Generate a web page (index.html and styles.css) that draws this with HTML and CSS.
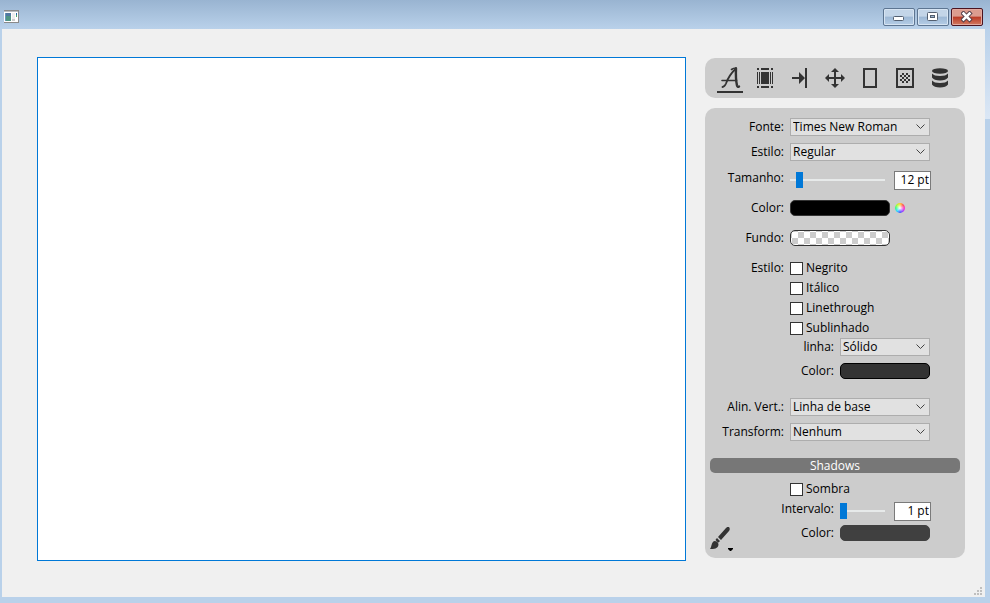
FILE: index.html
```html
<!DOCTYPE html>
<html lang="pt">
<head>
<meta charset="utf-8">
<title>Editor</title>
<link rel="stylesheet" href="styles.css">
</head>
<body>
<div class="window">
  <header class="titlebar">
    <svg class="app-icon" width="16" height="14" viewBox="0 0 16 14" shape-rendering="crispEdges">
      <path fill="#8a8a8a" d="M0 0h15v13H0z"/><path fill="#b8bcc0" d="M0 1h14v1H0z"/><path fill="#fff" d="M0 2h14v10H0z"/>
      <path fill="#5078a0" d="M2 3h5v3H2z"/><path fill="#4f9583" d="M2 6h5v5H2z"/><path fill="#6796bd" d="M1 3h1v8H1z"/>
      <path fill="#eee" d="M8 3h3v8H8z"/><path fill="#ccc" d="M8 9h3v2H8z"/><path fill="#2467a8" d="M12 3h1v2h-1z"/><path fill="#48a868" d="M12 5h1v2h-1z"/>
    </svg>
    <div class="window-buttons">
      <button class="win-btn" aria-label="Minimizar"><svg width="12" height="12" viewBox="0 0 12 12"><rect x=".5" y="5.500" width="10" height="4" rx="1" fill="#fff" stroke="#535f70"/></svg></button>
      <button class="win-btn" aria-label="Maximizar"><svg width="12" height="12" viewBox="0 0 12 12"><rect x=".5" y="1.500" width="10" height="8" rx="1" fill="#fff" stroke="#535f70"/><rect x="3.500" y="4.500" width="4" height="2" fill="#9eb6d0" stroke="#535f70"/></svg></button>
      <button class="win-btn win-close" aria-label="Fechar"><svg width="12" height="12" viewBox="0 0 12 12"><path d="M2.500 2.500l6 6m0-6l-6 6" stroke="#56424c" stroke-width="4.500" stroke-linecap="square"/><path d="M2.500 2.500l6 6m0-6l-6 6" stroke="#fff" stroke-width="2.500" stroke-linecap="square"/></svg></button>
    </div>
  </header>
  <main class="client">
    <div class="editor" contenteditable="true" role="textbox" aria-label="Texto"></div>
    <aside class="sidebar">
      <nav class="tools">
        <button class="tool tool-active" aria-label="Fonte"><svg width="26" height="24" viewBox="0 0 26 24" fill="none" stroke="#333" stroke-linecap="round"><path stroke-width="1.800" d="M5.500 21q2 0 3.500-3.500Q12 9 19 2.500"/><path stroke-width="2.400" d="M19 2.500q-.5 10 1 17 .5 2 2 1"/><path stroke-width="1.600" d="M14.500 3.500q2-1.500 4.500-1.500M5 14.500h14.500"/></svg></button>
        <button class="tool" aria-label="Parágrafo"><svg width="16" height="20" viewBox="0 0 16 20" fill="#333" shape-rendering="crispEdges"><path d="M0 0h2v2H0zM4 0h8v2H4zM14 0h2v2h-2zM0 4h1v12H0zM15 4h1v12h-1zM4 4h8v12H4zM0 18h2v2H0zM4 18h8v2H4zM14 18h2v2h-2zM2 4h1v12H2zM13 4h1v12h-1z"/></svg></button>
        <button class="tool" aria-label="Tabulação"><svg width="16" height="20" viewBox="0 0 16 20" fill="#333"><path d="M0 9h7V4l6 6-6 6v-5H0zM13 0h2v20h-2z"/></svg></button>
        <button class="tool" aria-label="Posição"><svg width="20" height="20" viewBox="0 0 20 20" fill="#333"><path d="M10 0l4 4h-3v5h5V6l4 4-4 4v-3h-5v5h3l-4 4-4-4h3v-5H4v3l-4-4 4-4v3h5V4H6z"/></svg></button>
        <button class="tool" aria-label="Página"><svg width="14" height="20" viewBox="0 0 14 20" fill="none" stroke="#333" stroke-width="2"><path d="M1 1h12v18H1z"/></svg></button>
        <button class="tool" aria-label="Fundo"><svg width="18" height="20" viewBox="0 0 18 20" shape-rendering="crispEdges"><path fill="none" stroke="#333" stroke-width="2" d="M1 1h16v18H1z"/><path fill="#333" d="M6 5h2v2H6zM10 5h2v2h-2zM4 7h2v2H4zM8 7h2v2H8zM12 7h2v2h-2zM6 9h2v2H6zM10 9h2v2h-2zM4 11h2v2H4zM8 11h2v2H8zM12 11h2v2h-2zM6 13h2v2H6zM10 13h2v2h-2z"/></svg></button>
        <button class="tool" aria-label="Dados"><svg width="16" height="20" viewBox="0 0 16 20" fill="#333"><ellipse cx="8" cy="3" rx="8" ry="2.700"/><path d="M0 5.500q2 2.500 8 2.500t8-2.500v4Q14 12.500 8 12.500T0 9.500zM0 12.500q2 2.500 8 2.500t8-2.500v4Q14 19.500 8 19.500T0 16.500z"/></svg></button>
      </nav>
      <form class="panel">
        <div class="row"><label class="label" for="font">Fonte:</label><span class="combo"><select id="font"><option>Times New Roman</option></select><svg class="chevron" width="9" height="6" viewBox="0 0 9 6"><path d="M.5.5l4 4 4-4"/></svg></span></div>
        <div class="row gap-s"><label class="label" for="face">Estilo:</label><span class="combo"><select id="face"><option>Regular</option></select><svg class="chevron" width="9" height="6" viewBox="0 0 9 6"><path d="M.5.5l4 4 4-4"/></svg></span></div>
        <div class="row gap-m"><label class="label raised" for="size">Tamanho:</label><input class="slider" id="size" type="range" min="6" max="84" value="11"><input class="number" type="text" value="12 pt" aria-label="Tamanho em pontos"></div>
        <div class="row gap-m"><label class="label" for="color">Color:</label><button type="button" class="swatch swatch-black" id="color"></button><button type="button" class="wheel" aria-label="Escolher cor"></button></div>
        <div class="row gap-l"><label class="label" for="back">Fundo:</label><button type="button" class="swatch swatch-clear" id="back"></button></div>
        <fieldset class="styles gap-l">
          <legend class="hidden">Estilo do texto</legend>
          <span class="label">Estilo:</span>
          <div class="checks">
            <label class="check"><input type="checkbox">Negrito</label>
            <label class="check"><input type="checkbox">Itálico</label>
            <label class="check"><input type="checkbox">Linethrough</label>
            <label class="check"><input type="checkbox">Sublinhado</label>
          </div>
        </fieldset>
        <div class="row row-low"><label class="label label-wide" for="line">linha:</label><span class="combo combo-short"><select id="line"><option>Sólido</option></select><svg class="chevron" width="9" height="6" viewBox="0 0 9 6"><path d="M.5.5l4 4 4-4"/></svg></span></div>
        <div class="row gap-s"><label class="label label-wide" for="line-color">Color:</label><button type="button" class="swatch swatch-short swatch-dark" id="line-color"></button></div>
        <div class="row gap-xl"><label class="label" for="valign">Alin. Vert.:</label><span class="combo"><select id="valign"><option>Linha de base</option></select><svg class="chevron" width="9" height="6" viewBox="0 0 9 6"><path d="M.5.5l4 4 4-4"/></svg></span></div>
        <div class="row gap-s"><label class="label" for="transform">Transform:</label><span class="combo"><select id="transform"><option>Nenhum</option></select><svg class="chevron" width="9" height="6" viewBox="0 0 9 6"><path d="M.5.5l4 4 4-4"/></svg></span></div>
        <h2 class="section">Shadows</h2>
        <div class="shadows">
          <button type="button" class="brush" aria-label="Pincel"><svg width="25" height="26" viewBox="0 0 25 26"><path fill="#333" d="M19 0c1 1 1 3 0 4l-8 9-3-3 8-9q2-2 3-1zM7 11l3 3c-1 1-1.500 1.500-2 1.500L5.500 13q.5-1 1.500-2zM4.500 14q3 0 4 3c0 5-5 5-8.500 5 2-2 1-7 4.500-8z"/><path d="M18 21h5v1l-2 2h-1l-2-2z"/></svg></button>
          <div class="shadow-rows">
            <div class="row"><label class="check check-in"><input type="checkbox">Sombra</label></div>
            <div class="row gap-xs"><label class="label label-in raised" for="spread">Intervalo:</label><input class="slider slider-short" id="spread" type="range" min="1" max="20" value="1"><input class="number" type="text" value="1 pt" aria-label="Intervalo em pontos"></div>
            <div class="row gap-xs"><label class="label label-in" for="shadow-color">Color:</label><button type="button" class="swatch swatch-short swatch-grey" id="shadow-color"></button></div>
          </div>
        </div>
      </form>
    </aside>
    <svg class="grip" width="8" height="8" viewBox="0 0 8 8" fill="#bfbfbf" shape-rendering="crispEdges"><path d="M6 0h2v2H6zM3 3h2v2H3zM6 3h2v2H6zM0 6h2v2H0zM3 6h2v2H3zM6 6h2v2H6z"/></svg>
  </main>
</div>
</body>
</html>
```

FILE: styles.css
```css
* { box-sizing: border-box; }

body {
  margin: 0;
  font: 12px/20px "Open Sans", "Noto Sans", sans-serif;
  color: #000;
}

button, input, select { font: inherit; color: inherit; margin: 0; }
button { padding: 0; border: 0; background: none; }

.window {
  display: flex;
  flex-direction: column;
  min-height: 100vh;
  padding: 0 5px 6px 2px;
  background:
    linear-gradient(#b9d1ea, #dbe7f5) right 29px / 5px 90px no-repeat,
    linear-gradient(#99b4d1, #b9d1ea 29px);
}

.titlebar {
  display: flex;
  justify-content: space-between;
  align-items: flex-start;
  height: 29px;
}

.app-icon { margin: 10px 2px; }

.window-buttons { display: flex; gap: 2px; padding-top: 8px; margin-right: 2px; }

.win-btn {
  display: grid;
  place-items: center;
  width: 32px;
  height: 18px;
  border: 1px solid #5d7591;
  border-radius: 2px;
  background: linear-gradient(#c3d5e8 45%, #9db8d5 50%, #b5cde6);
  box-shadow: inset 0 0 0 1px #d6e4f2;
}

.win-close {
  border-color: #4b1420;
  background: linear-gradient(#dc9c8f 45%, #bb3a25 50%, #d17a62);
  box-shadow: inset 0 0 0 1px #e3a99f;
}

.client {
  position: relative;
  display: flex;
  flex: 1;
  gap: 19px;
  padding: 28px 20px 36px 35px;
  background: #f0f0f0;
}

.editor {
  flex: 1;
  border: 1px solid #0078d7;
  background: #fff;
}

.sidebar { flex: 0 0 260px; padding-top: 1px; }

.tools, .panel { border-radius: 10px; background: #ccc; }

.tools {
  display: flex;
  justify-content: space-between;
  height: 40px;
  padding: 5px 10px;
}

.tool {
  display: grid;
  place-items: center;
  width: 30px;
  height: 30px;
}

.tool-active { background: linear-gradient(#333, #333) center bottom / 26px 2px no-repeat; }

.panel { margin-top: 10px; padding: 9px 5px 5px; }

.row { display: flex; align-items: center; height: 20px; }
.row-low { height: 18px; }

.gap-xs { margin-top: 2px; }
.gap-s { margin-top: 5px; }
.gap-m { margin-top: 8px; }
.gap-l { margin-top: 10px; }
.gap-xl { margin-top: 16px; }

.label { flex: none; width: 80px; padding-right: 6px; text-align: right; }
.label-wide { width: 130px; }
.label-in { width: 105px; }
.raised { padding-bottom: 4px; }

.combo { display: grid; width: 140px; height: 18px; }
.combo-short { width: 90px; }

.combo select {
  grid-area: 1 / 1;
  appearance: none;
  width: 100%;
  height: 18px;
  padding: 0 18px 0 2px;
  border: 1px solid #adadad;
  border-radius: 0;
  background: #e1e1e1;
  line-height: 16px;
}

.chevron {
  grid-area: 1 / 1;
  place-self: center end;
  margin-right: 5px;
  fill: none;
  stroke: #444;
  pointer-events: none;
}

.slider {
  appearance: none;
  width: 95px;
  height: 18px;
  background: linear-gradient(#e7eaea, #e7eaea) center / 100% 2px no-repeat;
}

.slider-short { width: 45px; }

.slider::-webkit-slider-thumb {
  appearance: none;
  width: 7px;
  height: 16px;
  background: #0078d7;
}

.number {
  width: 37px;
  height: 19px;
  margin-left: 9px;
  padding: 0 1px;
  border: 1px solid #7a7a7a;
  background: #fff;
  text-align: right;
}

.swatch {
  width: 100px;
  height: 16px;
  border: 1px solid #333;
  border-radius: 5px;
}

.swatch-short { width: 90px; }
.swatch-black { background: #000; }
.swatch-dark { border-color: #000; background: #333; }
.swatch-grey { border-color: #404040; background: #404040; }
.swatch-clear {
  background: repeating-conic-gradient(#ccc 0 25%, #fff 0 50%) 1px 1px / 12px 12px #fff;
}

.wheel {
  width: 10px;
  height: 10px;
  margin-left: 5px;
  border-radius: 50%;
  background: radial-gradient(#fff, transparent 60%), conic-gradient(#fc3, #f55, #f3c, #a4f, #45f, #3df, #3f8, #af3, #fc3);
}

.styles { display: flex; min-width: 0; margin-inline: 0; margin-bottom: 0; padding: 0; border: 0; }
.hidden { display: none; }

.check { display: flex; align-items: center; gap: 3px; height: 20px; }
.check-in { margin-left: 55px; }

.check input {
  appearance: none;
  width: 13px;
  height: 13px;
  border: 1px solid #333;
  background: #fff;
}

.section {
  margin: 16px 0 6px;
  border-radius: 5px;
  background: #777;
  color: #fff;
  font-size: 12px;
  font-weight: 400;
  line-height: 15px;
  text-align: center;
}

.shadows { display: flex; align-items: flex-end; }
.brush { width: 25px; height: 26px; }
.brush svg { display: block; }
.shadow-rows { padding-bottom: 10px; }

.grip { position: absolute; right: 3px; bottom: 2px; }
```
